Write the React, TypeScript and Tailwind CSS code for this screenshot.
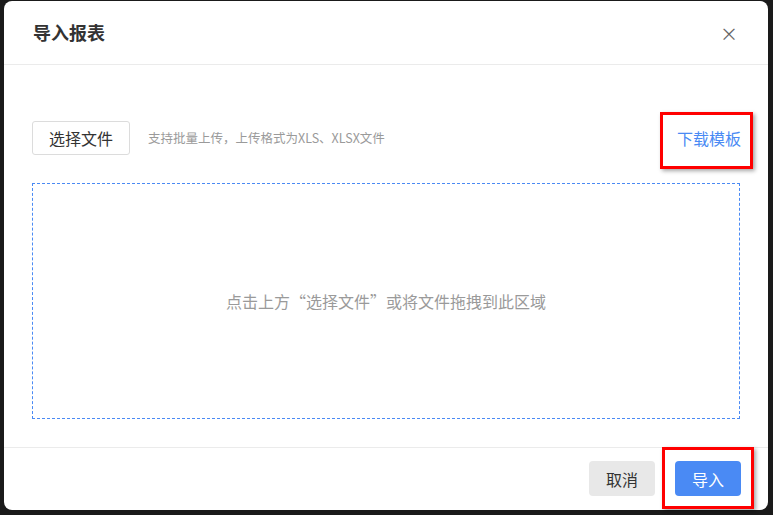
import React from "react";

const font = {
  fontFamily: '"Noto Sans CJK SC", "Liberation Sans", sans-serif',
};

const ImportReportDialog = () => {
  return (
    <div className="relative flex w-full flex-col rounded-[8px] bg-white">
      {/* header */}
      <div className="flex h-[64px] items-center justify-between border-b border-[#ebebeb] pl-[29px] pr-[30px]">
        <h2 className="text-[18px] font-bold text-[#333]">导入报表</h2>
        <button type="button" className="text-[18px] leading-none text-[#666]">
          ×
        </button>
      </div>

      {/* body */}
      <div className="flex flex-col px-[28px] pt-[56px] pb-[28px]">
        <div className="flex h-[34px] items-center">
          <button
            type="button"
            className="flex h-[34px] w-[98px] items-center justify-center rounded-[3px] border border-[#dcdcdc] bg-white text-[16px] text-[#333]"
          >
            选择文件
          </button>
          <span className="ml-[18px] text-[12.5px] text-[#9a9a9a]">
            支持批量上传，上传格式为XLS、XLSX文件
          </span>
          <a className="ml-auto mr-[-1px] text-[16px] text-[#4a8af4]">下载模板</a>
        </div>
        <div className="mt-[28px] flex h-[236px] items-center justify-center border border-dashed border-[#4a8af4]">
          <span className="mt-[-1px] text-[16px] text-[#9a9a9a]">
            点击上方“选择文件”或将文件拖拽到此区域
          </span>
        </div>
      </div>

      {/* footer */}
      <div className="flex justify-end gap-[20px] border-t border-[#ebebeb] pt-[13px] pb-[14px] pr-[27px]">
        <button
          type="button"
          className="h-[35px] w-[66px] rounded-[4px] bg-[#e8e8e8] text-[16px] text-[#333]"
        >
          取消
        </button>
        <button
          type="button"
          className="h-[35px] w-[66px] rounded-[4px] bg-[#4a8af4] text-[16px] text-white"
        >
          导入
        </button>
      </div>

      {/* annotation boxes */}
      <div className="pointer-events-none absolute left-[656px] top-[111px] h-[57px] w-[93px] border-[3px] border-[#f00] shadow-[2px_2px_4px_rgba(0,0,0,0.35)]" />
      <div className="pointer-events-none absolute left-[658px] top-[446px] h-[62px] w-[92px] border-[3px] border-[#f00] shadow-[2px_2px_4px_rgba(0,0,0,0.35)]" />
    </div>
  );
};

export default function App() {
  return (
    <div
      className="h-[515px] w-[773px] overflow-hidden bg-[#1a1a1a] pl-[4px] pt-[1px] pr-[5px]"
      style={font}
    >
      <ImportReportDialog />
    </div>
  );
}
